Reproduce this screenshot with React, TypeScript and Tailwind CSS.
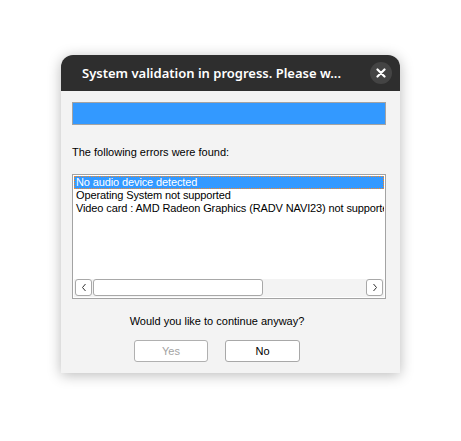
export default function App() {
  const rows = [
    'No audio device detected',
    'Operating System not supported',
    'Video card : AMD Radeon Graphics (RADV NAVI23) not supported',
  ];

  return (
    <div className="w-[461px] h-[441px] bg-white pt-[55px] pl-[61px]">
      <div className="w-[339px] h-[318px] flex flex-col rounded-t-[12px] bg-[#f3f3f3] shadow-[0_2px_14px_rgba(0,0,0,0.28)] overflow-hidden">
        {/* title bar */}
        <div className="h-[36px] shrink-0 bg-[#2e2e2e] flex items-center pl-[21px] pr-[8px]">
          <span className="flex-1 text-white text-[13px] font-semibold font-['Noto_Sans',sans-serif] leading-none pt-[1px]">
            System validation in progress. Please w...
          </span>
          <div className="w-[22px] h-[22px] rounded-full bg-[#444444] flex items-center justify-center">
            <svg width="10" height="10" viewBox="0 0 10 10">
              <path d="M1.5 1.5 L8.5 8.5 M8.5 1.5 L1.5 8.5" stroke="white" strokeWidth="2.2" strokeLinecap="round" />
            </svg>
          </div>
        </div>

        {/* body */}
        <div className="flex-1 flex flex-col pl-[11px] pr-[14px] pt-[11px] font-['Liberation_Sans',Arial,sans-serif] text-[11px] text-black">
          <div className="h-[23px] border border-[#a3a3a3] bg-[#3399ff]" />

          <p className="mt-[21px] leading-[13px]">The following errors were found:</p>

          <div className="mt-[15px] h-[125px] border border-[#a3a3a3] bg-white flex flex-col p-[1px]">
            <div className="flex-1 overflow-hidden tracking-[-0.12px]">
              {rows.map((r, i) => (
                <div
                  key={r}
                  className={
                    i === 0
                      ? 'h-[13px] leading-[11px] bg-[#3399ff] text-white border border-dotted border-[#ff8a1f] pl-[1px] whitespace-nowrap'
                      : 'h-[13px] leading-[13px] pl-[2px] whitespace-nowrap'
                  }
                >
                  {r}
                </div>
              ))}
            </div>
            <div className="h-[18px] flex items-stretch bg-[#f3f3f3] gap-[1px] pl-[1px] pr-[1px] pb-[1px]">
              <div className="w-[17px] border border-[#a8a8a8] rounded-[3px] bg-white flex items-center justify-center">
                <svg width="6" height="9" viewBox="0 0 6 9">
                  <path d="M4.5 1 L1.5 4.5 L4.5 8" stroke="#333" strokeWidth="1" fill="none" />
                </svg>
              </div>
              <div className="w-[170px] border border-[#a8a8a8] rounded-[3px] bg-white" />
              <div className="flex-1" />
              <div className="w-[17px] border border-[#a8a8a8] rounded-[3px] bg-white flex items-center justify-center">
                <svg width="6" height="9" viewBox="0 0 6 9">
                  <path d="M1.5 1 L4.5 4.5 L1.5 8" stroke="#333" strokeWidth="1" fill="none" />
                </svg>
              </div>
            </div>
          </div>

          <p className="mt-[16px] leading-[13px] text-center pr-[24px]">Would you like to continue anyway?</p>

          <div className="mt-[12px] flex justify-center gap-[17px] pr-[24px]">
            <div className="w-[74px] h-[22px] border border-[#b0b0b0] rounded-[3px] bg-white flex items-center justify-center text-[#a3a3a3]">
              Yes
            </div>
            <div className="w-[75px] h-[22px] border border-[#a8a8a8] rounded-[3px] bg-white flex items-center justify-center">
              No
            </div>
          </div>
        </div>
      </div>
    </div>
  );
}
